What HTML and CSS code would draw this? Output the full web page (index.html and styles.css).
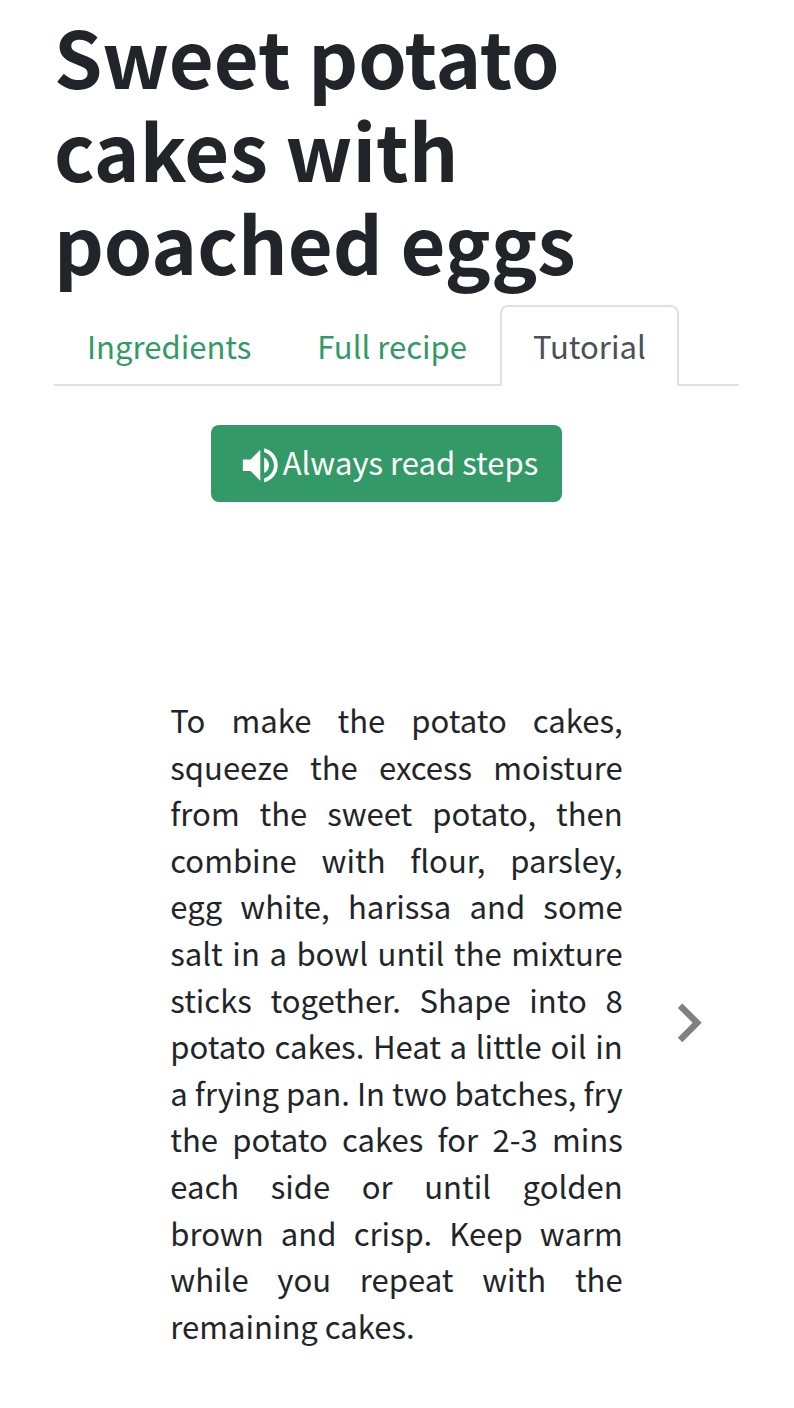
FILE: index.html
```html
<!DOCTYPE html>
<html lang="en">
<head>
<meta charset="utf-8">
<title>Sweet potato cakes with poached eggs</title>
<link rel="stylesheet" href="styles.css">
</head>
<body>
<main class="recipe">
  <h1 class="title">Sweet potato cakes with poached eggs</h1>
  <nav class="tabs">
    <a class="tab">Ingredients</a>
    <a class="tab">Full recipe</a>
    <a class="tab active">Tutorial</a>
  </nav>
  <button class="read-button" type="button">
    <svg class="speaker" viewBox="0 0 24 24"><path d="M3 9v6h4l5 5V4L7 9H3zm13.5 3c0-1.77-1.02-3.29-2.5-4.03v8.05c1.48-.73 2.5-2.25 2.5-4.02zM14 3.23v2.06c2.89.86 5 3.54 5 6.71s-2.11 5.85-5 6.71v2.06c4.01-.91 7-4.49 7-8.77s-2.99-7.86-7-8.77z"/></svg>
    <span class="label">Always read steps</span>
  </button>
  <section class="step">
    <p class="step-text">To make the potato cakes, squeeze the excess moisture from the sweet potato, then combine with flour, parsley, egg white, harissa and some salt in a bowl until the mixture sticks together. Shape into 8 potato cakes. Heat a little oil in a frying pan. In two batches, fry the potato cakes for 2-3 mins each side or until golden brown and crisp. Keep warm while you repeat with the remaining cakes.</p>
    <svg class="next" viewBox="0 0 24 24"><path d="M10 6L8.59 7.41 13.17 12l-4.58 4.59L10 18l6-6z"/></svg>
  </section>
</main>
</body>
</html>
```
FILE: styles.css
```css
* { box-sizing: border-box; }
body {
  margin: 0;
  background: #fff;
  color: #212529;
  font-family: "Noto Sans CJK SC", "Noto Sans", sans-serif;
  font-size: 31.06px;
  line-height: 46.59px;
}
.recipe { display: flex; flex-direction: column; padding: 9px 55px 0 54.4px; }
.title {
  margin: 0 0 0 -0.5px;
  width: 580px;
  font-size: 77.6px;
  font-weight: 700;
  line-height: 93.18px;
}
.tabs { display: flex; margin-top: 16px; height: 81px; border-bottom: 2px solid #dee2e6; }
.tab {
  height: 81px;
  padding: 16px 31.4px 0 30.6px;
  border: 2px solid transparent;
  border-bottom: 0;
  color: #339966;
  white-space: nowrap;
}
.tab.active {
  border-color: #dee2e6;
  border-radius: 8px 8px 0 0;
  background: #fff;
  color: #495057;
}
.read-button {
  display: flex;
  align-items: center;
  align-self: flex-start;
  width: 351px;
  height: 77px;
  margin: 39px 0 0 157.1px;
  padding: 0 0 0 25.6px;
  border: 0;
  border-radius: 8px;
  background: #339966;
  color: #fff;
  font: inherit;
  white-space: nowrap;
}
.speaker { flex: none; width: 46.6px; height: 46.6px; margin-top: 4px; fill: #fff; }
.label { margin: -2px 0 0 -1px; }
.step { display: flex; align-items: center; margin: 195.5px 0 0 115.9px; }
.step-text { width: 452.4px; margin: 0; text-align: justify; }
.next { flex: none; width: 77.65px; height: 77.65px; margin: -1px 0 0 27.6px; fill: #808080; }
```
